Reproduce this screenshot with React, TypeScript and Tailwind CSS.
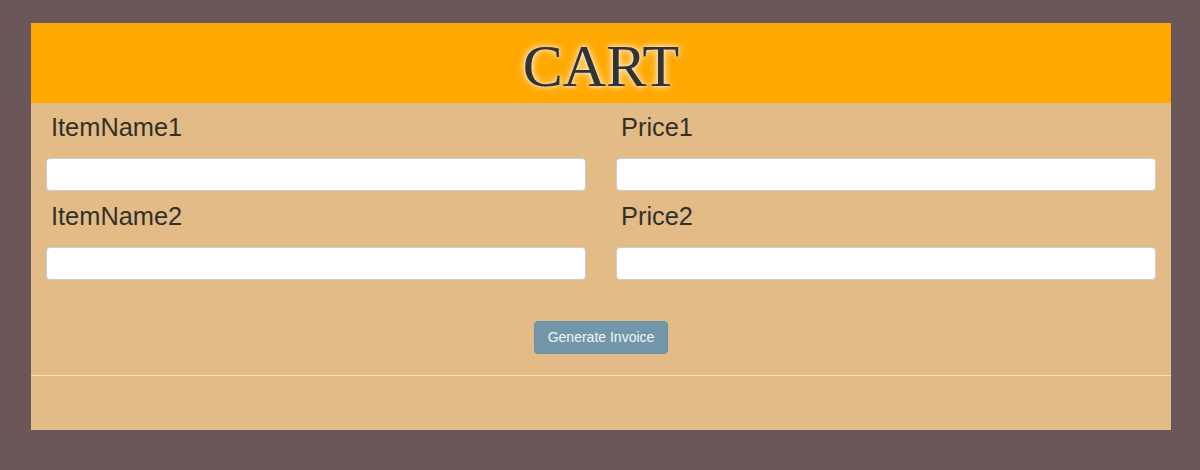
import React from 'react';

const rows = [
  { name: 'ItemName1', price: 'Price1' },
  { name: 'ItemName2', price: 'Price2' },
];

function Field({ label }: { label: string }) {
  return (
    <div className="flex flex-col px-[15px] pb-[1px]">
      <label className="pl-[5px] pt-[6px] text-[25.4px] leading-[36px] text-[#33302a] [font-family:'Liberation_Sans',Arial,sans-serif]">
        {label}
      </label>
      <input
        type="text"
        className="mt-[13px] h-[33px] w-full rounded-[4px] border border-[#cccccc] bg-white px-3 text-sm outline-none"
      />
    </div>
  );
}

export default function App() {
  return (
    <div className="min-h-[470px] bg-[#6b5759] pt-[23px]">
      <div className="ml-[31px] w-[1140px] bg-[#e3bb86]">
        {/* header */}
        <div className="flex h-[80px] items-center justify-center bg-[#ffa800]">
          <h1 className="pt-[5px] text-[60px] leading-none text-[#333333] [font-family:'Liberation_Serif','Times_New_Roman',serif] [text-shadow:0_0_8px_#fff,0_0_3px_#fff,0_0_1px_#333]">
            CART
          </h1>
        </div>

        {/* fields */}
        <div className="flex flex-col">
          {rows.map((r) => (
            <div key={r.name} className="grid grid-cols-2">
              <Field label={r.name} />
              <Field label={r.price} />
            </div>
          ))}
        </div>

        <div className="flex justify-center pt-[40px]">
          <button className="h-[33px] w-[134px] rounded-[4px] border border-[#6a8fa1] bg-[#7297aa] text-[14px] text-[#f4f4f4] [font-family:'Liberation_Sans',Arial,sans-serif]">
            Generate Invoice
          </button>
        </div>

        <div className="mt-[21px] border-t border-[#f5dfbd]" />
        <div className="h-[54px]" />
      </div>
    </div>
  );
}
